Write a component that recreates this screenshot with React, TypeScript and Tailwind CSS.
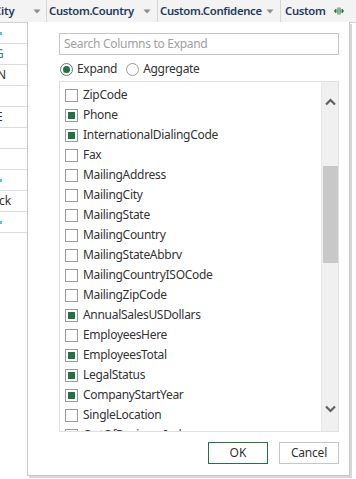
import React from "react";

const items: [string, boolean][] = [
  ["ZipCode", false],
  ["Phone", true],
  ["InternationalDialingCode", true],
  ["Fax", false],
  ["MailingAddress", false],
  ["MailingCity", false],
  ["MailingState", false],
  ["MailingCountry", false],
  ["MailingStateAbbrv", false],
  ["MailingCountryISOCode", false],
  ["MailingZipCode", false],
  ["AnnualSalesUSDollars", true],
  ["EmployeesHere", false],
  ["EmployeesTotal", true],
  ["LegalStatus", true],
  ["CompanyStartYear", true],
  ["SingleLocation", false],
  ["OutOfBusinessInd", false],
];

function Arrow() {
  return (
    <svg width="8" height="5" viewBox="0 0 8 5" className="shrink-0">
      <path d="M0.5 0.5 L7.5 0.5 L4 4.5 Z" fill="#8c8c8c" />
    </svg>
  );
}

function ExpandIcon() {
  return (
    <svg width="10" height="8" viewBox="0 0 10 8">
      <path d="M4 0.5 V7.5 M6 0.5 V7.5" stroke="#217346" strokeWidth="1" />
      <path d="M3.5 4 H0.5 M0.5 4 L2.3 2.2 M0.5 4 L2.3 5.8" stroke="#217346" strokeWidth="1.2" fill="none" />
      <path d="M6.5 4 H9.5 M9.5 4 L7.7 2.2 M9.5 4 L7.7 5.8" stroke="#217346" strokeWidth="1.2" fill="none" />
    </svg>
  );
}

function Check({ on }: { on: boolean }) {
  return (
    <div className="w-[13px] h-[13px] border border-[#9a9a9a] bg-white flex items-center justify-center shrink-0">
      {on && <div className="w-[7px] h-[7px] bg-[#217346]" />}
    </div>
  );
}

function Radio({ on }: { on: boolean }) {
  return (
    <div
      className={
        "w-[13px] h-[13px] rounded-full border flex items-center justify-center shrink-0 " +
        (on ? "border-[#5f7f6c]" : "border-[#9a9a9a]")
      }
    >
      {on && <div className="w-[7px] h-[7px] rounded-full bg-[#217346]" />}
    </div>
  );
}

export default function App() {
  const font = { fontFamily: '"Noto Sans", "Open Sans", Arial, sans-serif' };
  return (
    <div
      className="relative w-[356px] h-[479px] overflow-hidden bg-white text-[#333]"
      style={font}
    >
      {/* Header */}
      <div className="flex h-[23px] bg-[#f3f3f3] border-b border-[#d0d0d0] text-[11.3px] font-semibold text-[#243a5a] leading-none">
        <div className="w-[47px] flex items-center justify-between pr-[5px] border-r border-[#d6d6d6] overflow-hidden">
          <span className="ml-[-6px] tracking-[-0.2px]">City</span>
          <Arrow />
        </div>
        <div className="w-[111px] flex items-center justify-between pl-[2px] pr-[6px] border-r border-[#d6d6d6] overflow-hidden">
          <span className="tracking-[-0.3px]">Custom.Country</span>
          <Arrow />
        </div>
        <div className="w-[123px] flex items-center justify-between pl-[2px] pr-[6px] border-r border-[#d6d6d6] overflow-hidden">
          <span className="tracking-[-0.3px]">Custom.Confidence</span>
          <Arrow />
        </div>
        <div className="flex-1 flex items-center justify-between pl-[4px] pr-[12px]">
          <span className="tracking-[-0.3px]">Custom</span>
          <ExpandIcon />
        </div>
      </div>

      {/* Left grid column */}
      <div className="w-[27px] text-[12px] leading-none">
        {["dot", "G", "N", "", "E", "", "", "dot", "ck", "dot"].map((t, i) => (
          <div
            key={i}
            className="h-[21px] border-b border-[#dcdcdc] flex items-center overflow-hidden"
          >
            {t === "dot" && <div className="w-[2px] h-[3px] bg-[#5bc0eb]" />}
            {t === "G" && <span className="ml-[-5px] text-[#3f6fa8]">G</span>}
            {t === "N" && <span className="ml-[-3px] text-[#333]">N</span>}
            {t === "E" && <span className="ml-[-4px] text-[#333]">E</span>}
            {t === "ck" && <span className="ml-[-1px] text-[#333]">ck</span>}
          </div>
        ))}
      </div>

      {/* Dialog */}
      <div className="absolute left-[27px] top-[22px] w-[323px] h-[454px] bg-white border-l border-r border-b border-[#c8c8c8] shadow-[2px_2px_0_#d8d8d8] flex flex-col pl-[31px] pr-[10px] pt-[11px]">
        <div className="h-[22px] border border-[#c6c6c6] flex items-center px-[4px] text-[12px] text-[#a0a0a0] tracking-[-0.3px]">
          Search Columns to Expand
        </div>
        <div className="flex items-center h-[14px] mt-[7px] text-[12px] text-[#333] tracking-[-0.3px]">
          <div className="ml-[1px]">
            <Radio on />
          </div>
          <span className="ml-[4px]">Expand</span>
          <div className="ml-[9px]">
            <Radio on={false} />
          </div>
          <span className="ml-[4px]">Aggregate</span>
        </div>
        <div className="mt-[5px] h-[351px] border border-[#e0e0e0] flex overflow-hidden">
          <div className="flex-1 pt-[3px] overflow-hidden">
            {items.map(([name, on]) => (
              <div key={name} className="h-[20px] flex items-center pl-[5px]">
                <Check on={on} />
                <span className="ml-[5px] text-[12px] text-[#333] tracking-[-0.3px] whitespace-nowrap">
                  {name}
                </span>
              </div>
            ))}
          </div>
          <div className="w-[17px] bg-[#f0f0f0] flex flex-col items-center border-l border-[#e8e8e8]">
            <div className="h-[84px] w-full flex justify-center pt-[16px]">
              <svg width="11" height="8" viewBox="0 0 11 8">
                <path d="M1 6.5 L5.5 2 L10 6.5" stroke="#606060" strokeWidth="2.2" fill="none" />
              </svg>
            </div>
            <div className="w-[15px] h-[97px] bg-[#c8c8c8]" />
            <div className="flex-1" />
            <div className="h-[30px] w-full flex justify-center pt-[4px]">
              <svg width="11" height="8" viewBox="0 0 11 8">
                <path d="M1 1.5 L5.5 6 L10 1.5" stroke="#606060" strokeWidth="2.2" fill="none" />
              </svg>
            </div>
          </div>
        </div>
        <div className="flex justify-end gap-[11px] mt-[10px] text-[12px] text-[#333]">
          <button className="w-[60px] h-[22px] border border-[#217346] bg-white flex items-center justify-center">
            OK
          </button>
          <button className="w-[60px] h-[22px] border border-[#c6c6c6] bg-white flex items-center justify-center tracking-[-0.2px]">
            Cancel
          </button>
        </div>
      </div>
    </div>
  );
}
